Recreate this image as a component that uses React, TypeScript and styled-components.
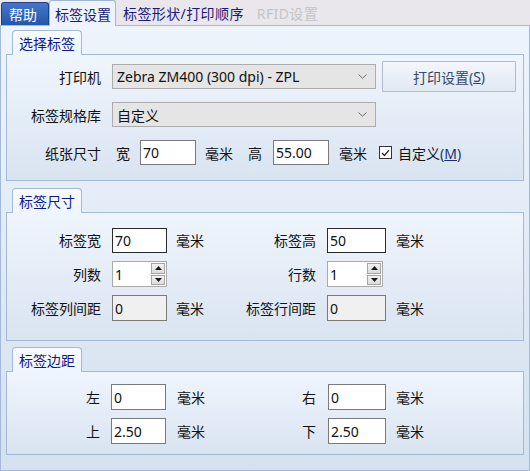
import styled, { createGlobalStyle } from 'styled-components';
import { FC, ReactNode } from 'react';

const GlobalStyle = createGlobalStyle`
  html, body {
    margin: 0;
    padding: 0;
    background: #e9e7eb;
  }
  body {
    font-family: "Noto Sans", "Noto Sans CJK SC", sans-serif;
    font-size: 14px;
    color: #111;
  }
  * {
    box-sizing: border-box;
  }
`;

const Window = styled.div`
  width: 530px;
  height: 471px;
  display: flex;
  flex-direction: column;
  background: #e9e7eb;
  overflow: hidden;
`;

// Top tab strip
const TabBar = styled.div`
  height: 25px;
  flex-shrink: 0;
  display: flex;
  align-items: flex-end;
  position: relative;
  z-index: 1;
`;

const HelpTab = styled.div`
  margin-left: 1px;
  width: 48px;
  height: 23px;
  padding-left: 7px;
  display: flex;
  align-items: center;
  color: #fff;
  background: linear-gradient(#4577c9, #2456ab);
  border: 1px solid #1d428c;
  border-bottom: none;
  border-radius: 3px 3px 0 0;
`;

const TopTab = styled.div<{ $active?: boolean; $disabled?: boolean }>`
  height: ${({ $active }) => ($active ? '26px' : '24px')};
  margin-bottom: ${({ $active }) => ($active ? '-1px' : '0')};
  padding: ${({ $active }) => ($active ? '0 4px 0 5px' : '0 6px 0 7px')};
  display: flex;
  align-items: center;
  color: ${({ $disabled }) => ($disabled ? '#c4c4c8' : '#1a1a78')};
  background: ${({ $active }) => ($active ? '#eef4fc' : 'transparent')};
  border: ${({ $active }) => ($active ? '1px solid #9fb5d2' : 'none')};
  border-bottom: none;
  border-radius: 3px 3px 0 0;
  white-space: nowrap;
  letter-spacing: ${({ $active }) => ($active ? '0' : '0.4px')};
`;

const Content = styled.div`
  flex: 1;
  display: flex;
  flex-direction: column;
  padding: 4px 4px 0 5px;
  border: 1px solid #a3b9d6;
  background: linear-gradient(#eef4fc, #d5e1ef);
`;

// Group box with a small tab title
const GroupWrap = styled.div<{ $mt: number }>`
  margin-top: ${({ $mt }) => $mt}px;
  display: flex;
  flex-direction: column;
`;

const GroupTab = styled.div`
  align-self: flex-start;
  margin-left: 6px;
  margin-bottom: -1px;
  height: 25px;
  padding: 0 6px;
  display: flex;
  align-items: center;
  color: #10198a;
  background: linear-gradient(#f8fbff, #eef5fe);
  border: 1px solid #a3b9d6;
  border-bottom: none;
  border-radius: 4px 4px 0 0;
  position: relative;
  z-index: 1;
`;

const GroupPanel = styled.div<{ $pt: number; $pb: number }>`
  width: 518px;
  padding: ${({ $pt, $pb }) => `${$pt}px 0 ${$pb}px 0`};
  display: flex;
  flex-direction: column;
  border: 1px solid #a3b9d6;
  background: linear-gradient(#eff5fd, #d9e4f1);
`;

const Row = styled.div<{ $h: number; $mt?: number }>`
  height: ${({ $h }) => $h}px;
  margin-top: ${({ $mt = 0 }) => $mt}px;
  display: flex;
  align-items: center;
`;

const Label = styled.span<{ $w: number }>`
  width: ${({ $w }) => $w}px;
  flex-shrink: 0;
  text-align: right;
  white-space: nowrap;
`;

const Text = styled.span<{ $ml: number; $w?: number }>`
  margin-left: ${({ $ml }) => $ml}px;
  width: ${({ $w }) => ($w ? `${$w}px` : 'auto')};
  flex-shrink: 0;
  white-space: nowrap;
`;

const Field = styled.input<{ $ml: number; $w: number; $dark?: boolean; $h?: number }>`
  margin-left: ${({ $ml }) => $ml}px;
  width: ${({ $w }) => $w}px;
  height: ${({ $h = 25 }) => $h}px;
  flex-shrink: 0;
  padding: 0 0 0 2px;
  font: inherit;
  color: #111;
  background: #fff;
  border: 1px solid ${({ $dark }) => ($dark ? '#2b2b2b' : '#7a7a7a')};
  border-radius: 0;
  outline: none;

  &:disabled {
    background: #f0f0f0;
    color: #111;
    -webkit-text-fill-color: #111;
  }
`;

const SelectBox = styled.div<{ $ml: number; $w: number }>`
  margin-left: ${({ $ml }) => $ml}px;
  width: ${({ $w }) => $w}px;
  height: 25px;
  flex-shrink: 0;
  padding: 0 8px 0 4px;
  display: flex;
  align-items: center;
  justify-content: space-between;
  background: #e5e5e5;
  border: 1px solid #acacac;
  white-space: nowrap;
`;

const Button = styled.div<{ $ml: number }>`
  margin-left: ${({ $ml }) => $ml}px;
  width: 134px;
  height: 31px;
  flex-shrink: 0;
  display: flex;
  align-items: center;
  justify-content: center;
  color: #37476a;
  background: linear-gradient(#f3f7fc, #e0e8f2);
  border: 1px solid #b0bccb;
  border-radius: 1px;

  & u {
    color: #2a3c78;
  }
`;

const Check = styled.span<{ $ml: number }>`
  margin-left: ${({ $ml }) => $ml}px;
  width: 13px;
  height: 13px;
  flex-shrink: 0;
  display: flex;
  align-items: center;
  justify-content: center;
  background: #fff;
  border: 1px solid #333;
`;

const Mnemonic = styled.span`
  color: #1f2f70;
  & u {
    text-underline-offset: 1px;
  }
`;

const Spinner = styled.div<{ $ml: number; $w: number }>`
  margin-left: ${({ $ml }) => $ml}px;
  width: ${({ $w }) => $w}px;
  height: 26px;
  flex-shrink: 0;
  padding: 1px 1px 1px 2px;
  display: flex;
  align-items: center;
  background: #fff;
  border: 1px solid #aaaaaa;
`;

const SpinValue = styled.span`
  flex: 1;
`;

const SpinButtons = styled.div`
  width: 14px;
  height: 22px;
  display: flex;
  flex-direction: column;
  gap: 1px;
`;

const SpinButton = styled.div`
  flex: 1;
  display: flex;
  align-items: center;
  justify-content: center;
  background: linear-gradient(#f2f2f2, #dcdcdc);
  border: 1px solid #a5a5a5;
`;

const Chevron = () => (
  <svg width="9" height="5" viewBox="0 0 9 5">
    <path d="M0.5 0.5 L4.5 4.2 L8.5 0.5" fill="none" stroke="#6e6e6e" strokeWidth="1" />
  </svg>
);

const Arrow: FC<{ up?: boolean }> = ({ up }) => (
  <svg width="7" height="4" viewBox="0 0 7 4">
    <path d={up ? 'M0 4 L3.5 0 L7 4 Z' : 'M0 0 L3.5 4 L7 0 Z'} fill="#1a1a1a" />
  </svg>
);

const Group: FC<{ title: string; mt: number; pt: number; pb: number; children: ReactNode }> = ({
  title,
  mt,
  pt,
  pb,
  children,
}) => (
  <GroupWrap $mt={mt}>
    <GroupTab>{title}</GroupTab>
    <GroupPanel $pt={pt} $pb={pb}>
      {children}
    </GroupPanel>
  </GroupWrap>
);

const Spin: FC<{ ml: number; w: number; value: string }> = ({ ml, w, value }) => (
  <Spinner $ml={ml} $w={w}>
    <SpinValue>{value}</SpinValue>
    <SpinButtons>
      <SpinButton>
        <Arrow up />
      </SpinButton>
      <SpinButton>
        <Arrow />
      </SpinButton>
    </SpinButtons>
  </Spinner>
);

export default function App() {
  return (
    <Window>
      <GlobalStyle />
      <TabBar>
        <HelpTab>帮助</HelpTab>
        <TopTab $active>标签设置</TopTab>
        <TopTab>标签形状/打印顺序</TopTab>
        <TopTab $disabled>RFID设置</TopTab>
      </TabBar>
      <Content>
        <Group title="选择标签" mt={0} pt={6} pb={15}>
          <Row $h={31}>
            <Label $w={94}>打印机</Label>
            <SelectBox $ml={11} $w={264}>
              <span>Zebra ZM400 (300 dpi) - ZPL</span>
              <Chevron />
            </SelectBox>
            <Button $ml={6}>
              打印设置(<u>S</u>)
            </Button>
          </Row>
          <Row $h={25} $mt={10}>
            <Label $w={94}>标签规格库</Label>
            <SelectBox $ml={11} $w={264}>
              <span>自定义</span>
              <Chevron />
            </SelectBox>
          </Row>
          <Row $h={25} $mt={13}>
            <Label $w={94}>纸张尺寸</Label>
            <Text $ml={15}>宽</Text>
            <Field $ml={10} $w={56} defaultValue="70" />
            <Text $ml={9}>毫米</Text>
            <Text $ml={15}>高</Text>
            <Field $ml={11} $w={56} defaultValue="55.00" />
            <Text $ml={10}>毫米</Text>
            <Check $ml={12}>
              <svg width="9" height="8" viewBox="0 0 9 8">
                <path d="M1 4 L3.5 6.5 L8 1.2" fill="none" stroke="#222" strokeWidth="1.3" />
              </svg>
            </Check>
            <Text $ml={6}>
              自定义
              <Mnemonic>
                (<u>M</u>)
              </Mnemonic>
            </Text>
          </Row>
        </Group>

        <Group title="标签尺寸" mt={7} pt={14} pb={19}>
          <Row $h={26}>
            <Label $w={94}>标签宽</Label>
            <Field $ml={11} $w={55} $dark defaultValue="70" />
            <Text $ml={9} $w={28}>毫米</Text>
            <Label $w={112}>标签高</Label>
            <Field $ml={11} $w={59} $dark defaultValue="50" />
            <Text $ml={10}>毫米</Text>
          </Row>
          <Row $h={26} $mt={8}>
            <Label $w={94}>列数</Label>
            <Spin ml={11} w={55} value="1" />
            <Text $ml={9} $w={28} />
            <Label $w={112}>行数</Label>
            <Spin ml={11} w={56} value="1" />
          </Row>
          <Row $h={26} $mt={8}>
            <Label $w={94}>标签列间距</Label>
            <Field $ml={11} $w={55} $h={26} disabled defaultValue="0" />
            <Text $ml={9} $w={28}>毫米</Text>
            <Label $w={112}>标签行间距</Label>
            <Field $ml={11} $w={59} $h={26} disabled defaultValue="0" />
            <Text $ml={10}>毫米</Text>
          </Row>
        </Group>

        <Group title="标签边距" mt={6} pt={12} pb={10}>
          <Row $h={26}>
            <Label $w={93}>左</Label>
            <Field $ml={11} $w={55} $h={26} defaultValue="0" />
            <Text $ml={11} $w={28}>毫米</Text>
            <Label $w={111}>右</Label>
            <Field $ml={12} $w={58} $h={26} defaultValue="0" />
            <Text $ml={10}>毫米</Text>
          </Row>
          <Row $h={26} $mt={8}>
            <Label $w={93}>上</Label>
            <Field $ml={11} $w={55} $h={26} defaultValue="2.50" />
            <Text $ml={11} $w={28}>毫米</Text>
            <Label $w={111}>下</Label>
            <Field $ml={12} $w={58} $h={26} defaultValue="2.50" />
            <Text $ml={10}>毫米</Text>
          </Row>
        </Group>
      </Content>
    </Window>
  );
}
